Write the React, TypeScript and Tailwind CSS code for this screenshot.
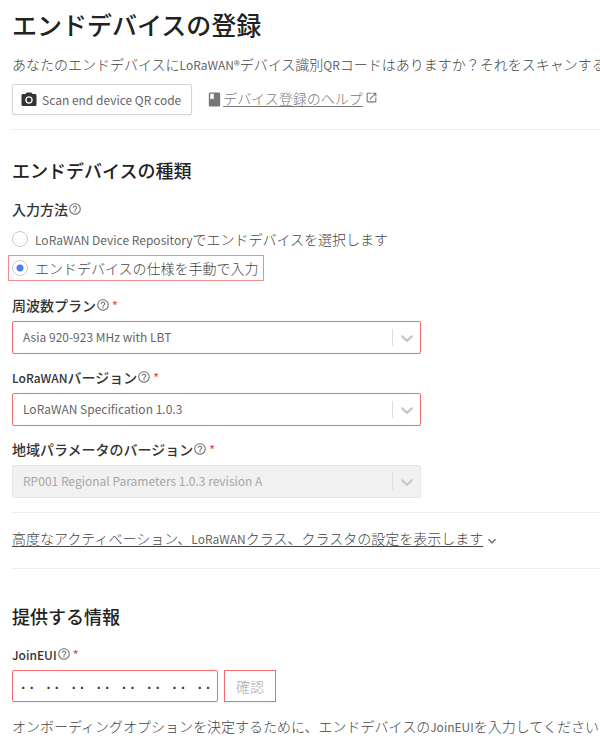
import { useState } from 'react';
import type { ReactNode } from 'react';
import { MdBook, MdExpandMore, MdHelpOutline, MdOpenInNew, MdPhotoCamera } from 'react-icons/md';

function Latin({ children }: { children: ReactNode }) {
  return <span className="text-[12px] font-normal text-[#666]">{children}</span>;
}

function FieldLabel({ htmlFor, required, children }: { htmlFor: string; required?: boolean; children: ReactNode }) {
  return (
    <label htmlFor={htmlFor} className="flex h-5 items-center font-medium text-[#333]">
      <span>{children}</span>
      <MdHelpOutline className="size-[14px] text-[#777]" />
      {required && <span className="ml-0.5 text-[12px] text-[#f04a50]">*</span>}
    </label>
  );
}

function SelectField({
  id,
  label,
  value,
  disabled,
}: {
  id: string;
  label: ReactNode;
  value: string;
  disabled?: boolean;
}) {
  return (
    <div>
      <FieldLabel htmlFor={id} required>
        {label}
      </FieldLabel>
      <div className="relative mt-1.5 max-w-[409px]">
        <select
          id={id}
          disabled={disabled}
          className="block h-[33px] w-full appearance-none rounded-xs border border-[#ee6b6e] bg-white pr-10 pb-0.5 pl-2.5 text-[12px] text-[#666] disabled:border-[#e6e6e6] disabled:bg-[#f1f1f1] disabled:text-[#a6a6a6] disabled:opacity-100"
        >
          <option>{value}</option>
        </select>
        <span className="pointer-events-none absolute inset-y-2 right-1 flex items-center border-l border-[#ddd] pl-1">
          <svg viewBox="0 0 20 20" className="size-5 fill-[#c8c8c8]">
            <path d="M4.516 7.548c0.436-0.446 1.043-0.481 1.576 0l3.908 3.747 3.908-3.747c0.533-0.481 1.141-0.446 1.574 0 0.436 0.445 0.408 1.197 0 1.615-0.406 0.418-4.695 4.502-4.695 4.502-0.217 0.223-0.502 0.335-0.787 0.335s-0.57-0.112-0.789-0.335c0 0-4.287-4.084-4.695-4.502s-0.436-1.17 0-1.615z" />
          </svg>
        </span>
      </div>
    </div>
  );
}

const radioClass =
  'size-4 shrink-0 appearance-none rounded-full border border-[#ccc] bg-white checked:bg-[radial-gradient(circle,#4a7dff_3px,white_4px)]';

export default function App() {
  const [method, setMethod] = useState('manual');
  const [joinEui, setJoinEui] = useState('·· ·· ·· ·· ·· ·· ·· ··');

  return (
    <main className="overflow-hidden bg-white pl-3 font-['Noto_Sans_CJK_JP',sans-serif] text-[14px] leading-5 text-[#444]">
      <h1 className="pt-2 text-[25px] leading-8 font-medium text-[#222]">エンドデバイスの登録</h1>
      <p className="mt-3.5 font-light whitespace-nowrap">
        あなたのエンドデバイスに<Latin>LoRaWAN®</Latin>デバイス識別<Latin>QR</Latin>
        コードはありますか？それをスキャンするこ
      </p>

      <div className="mt-[9px] flex items-center gap-3.5">
        <button className="flex h-[31px] items-center gap-1 rounded-xs border border-[#d4d4d4] pr-2.5 pl-[7px] text-[12px] text-[#666] shadow-xs">
          <MdPhotoCamera className="size-[18px] text-[#333]" />
          Scan end device QR code
        </button>
        <a href="#help" className="flex items-center pb-1 font-light text-[#777]">
          <MdBook className="mt-1 size-[17px]" />
          <span className="underline underline-offset-2">デバイス登録のヘルプ</span>
          <MdOpenInNew className="ml-0.5 size-[13px]" />
        </a>
      </div>

      <hr className="mt-3.5 border-[#eee]" />

      <section className="pb-3.5">
        <h2 className="mt-7 text-[18px] leading-6 font-medium text-[#222]">エンドデバイスの種類</h2>
        <div className="mt-[17px]">
          <FieldLabel htmlFor="method-manual">入力方法</FieldLabel>
        </div>
        <label className="mt-2 flex h-6 items-center gap-[7px] font-light">
          <input
            type="radio"
            name="method"
            className={radioClass}
            checked={method === 'repository'}
            onChange={() => setMethod('repository')}
          />
          <span>
            <Latin>LoRaWAN Device Repository</Latin>でエンドデバイスを選択します
          </span>
        </label>
        <label className="mt-1 -ml-1 flex h-[26px] w-fit items-center gap-[7px] border border-[#f08a8c] pr-1 pl-[3px] font-light">
          <input
            id="method-manual"
            type="radio"
            name="method"
            className={radioClass}
            checked={method === 'manual'}
            onChange={() => setMethod('manual')}
          />
          エンドデバイスの仕様を手動で入力
        </label>
        <div className="mt-3.5 flex flex-col gap-[13px]">
          <SelectField id="frequency-plan" label="周波数プラン" value="Asia 920-923 MHz with LBT" />
          <SelectField
            id="lorawan-version"
            label={
              <>
                <span className="text-[12px]">LoRaWAN</span>バージョン
              </>
            }
            value="LoRaWAN Specification 1.0.3"
          />
          <SelectField
            id="regional-version"
            label="地域パラメータのバージョン"
            value="RP001 Regional Parameters 1.0.3 revision A"
            disabled
          />
        </div>
      </section>

      <hr className="border-[#eee]" />
      <button className="mt-3.5 mb-[18px] flex h-[23px] items-center font-light">
        <span className="underline underline-offset-2">
          高度なアクティベーション、<Latin>LoRaWAN</Latin>クラス、クラスタの設定を表示します
        </span>
        <MdExpandMore className="mt-1 ml-px size-4 text-[#666]" />
      </button>
      <hr className="border-[#eee]" />

      <section>
        <h2 className="mt-[35px] text-[18px] leading-6 font-medium text-[#222]">提供する情報</h2>
        <div className="mt-4">
          <FieldLabel htmlFor="join-eui" required>
            <span className="text-[12px]">JoinEUI</span>
          </FieldLabel>
        </div>
        <div className="mt-1.5 flex gap-1.5">
          <input
            id="join-eui"
            type="text"
            value={joinEui}
            onChange={(e) => setJoinEui(e.target.value)}
            className="h-8 w-[206px] rounded-xs border border-[#ee6b6e] px-1.5 pt-1 font-['Liberation_Mono',monospace] text-[14px] font-bold text-[#333] shadow-xs"
          />
          <button disabled className="h-8 border border-[#ee6b6e] px-[11px] text-[14px] font-light text-[#aaa] shadow-xs">
            確認
          </button>
        </div>
        <p className="mt-3.5 pb-2 font-light whitespace-nowrap">
          オンボーディングオプションを決定するために、エンドデバイスの<Latin>JoinEUI</Latin>を入力してください
        </p>
      </section>
    </main>
  );
}
